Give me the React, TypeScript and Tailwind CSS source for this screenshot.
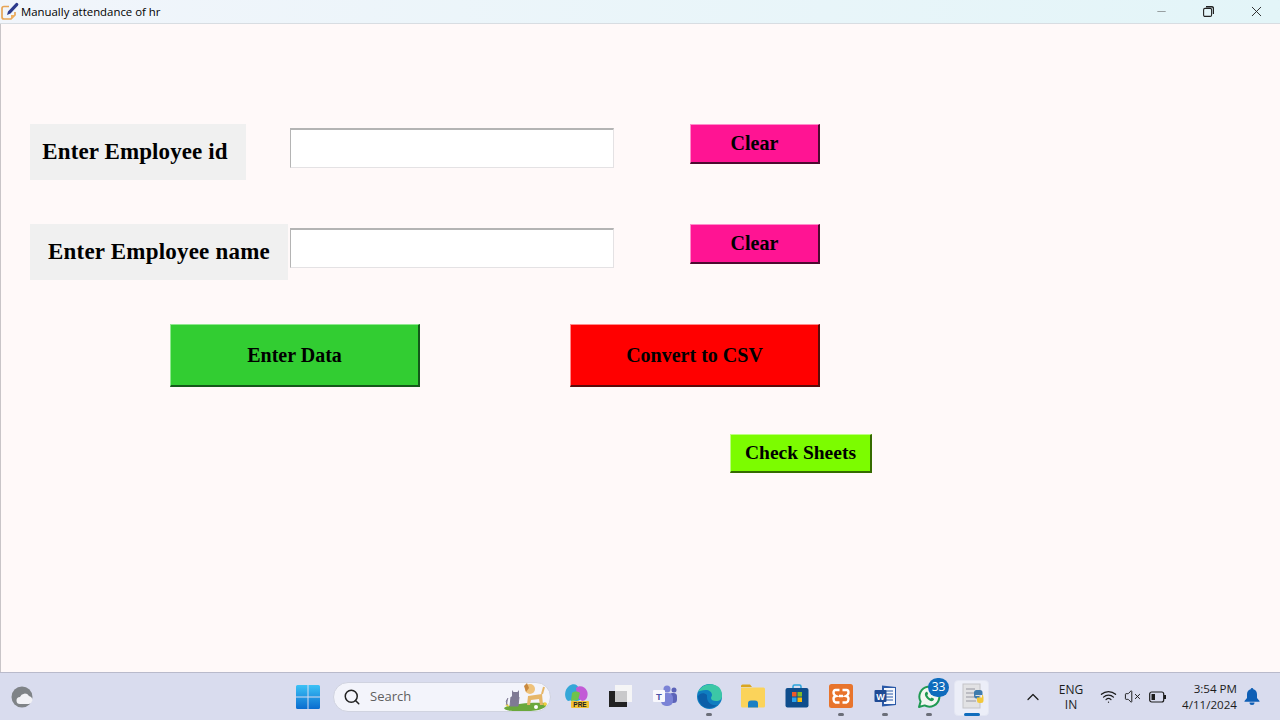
import { Search, ChevronUp, Wifi, VolumeX, Minus, X } from "lucide-react";

const serif = "font-['Liberation_Serif',serif] font-bold text-black";

function TaskIcon({ children, dot, active }: { children: React.ReactNode; dot?: boolean; active?: boolean }) {
  return (
    <div className="relative flex h-[47px] w-[44px] items-center justify-center pb-[1px]">
      {active && <div className="absolute left-[3px] top-[7px] h-[36px] w-[35px] rounded-[4px] border border-[#e3e6f3] bg-[#eceef8]" />}
      <div className="relative">{children}</div>
      {dot && <div className="absolute bottom-[4px] left-[19px] h-[3px] w-[6px] rounded-full bg-[#6b6e78]" />}
      {active && <div className="absolute bottom-[4px] left-[13px] h-[3px] w-[16px] rounded-full bg-[#0f6cbd]" />}
    </div>
  );
}

function ClearButton() {
  return (
    <button className={`ml-[76px] h-[40px] w-[130px] border-t border-l border-t-[#ff8ccb] border-l-[#ff8ccb] border-r-2 border-b-2 border-r-[#4d0a30] border-b-[#4d0a30] bg-[#ff1493] pb-[2px] text-[20px] ${serif}`}>
      Clear
    </button>
  );
}

function TitleBar() {
  return (
    <div className="flex h-[24px] items-center border-b border-[#d8dde2] bg-gradient-to-r from-[#f1f5fb] to-[#e3f5f8]">
      <svg width="20" height="22" viewBox="0 0 20 22" className="mb-[1px]">
        <path d="M9 6.500H4A2 2 0 0 0 2 8.500V17a2 2 0 0 0 2 2h7l4-4v-3" fill="none" stroke="#e8a556" strokeWidth="1.700" />
        <path d="M11 19v-4h4z" fill="#f0b060" />
        <path d="M7 15l1-3.500L15.500 3.500a1.500 1.500 0 0 1 2.500 2L10.500 13.500z" fill="#2d3a8c" />
      </svg>
      <span className="ml-[1px] font-['Open_Sans',sans-serif] text-[11.4px] text-black">Manually attendance of hr</span>
      <div className="ml-auto flex items-center text-[#222]">
        <Minus size={13} strokeWidth={1} className="mr-[35px] text-[#555]" />
        <svg width="11" height="11" viewBox="0 0 11 11" className="mr-[34px]" fill="none" stroke="#222" strokeWidth="1.1">
          <rect x="0.6" y="2.4" width="8" height="8" rx="1.4" />
          <path d="M3 .7h5.5a2 2 0 0 1 2 2V8" strokeWidth="1.4" />
        </svg>
        <X size={17} strokeWidth={1.3} className="mr-[15px]" />
      </div>
    </div>
  );
}

function FormArea() {
  return (
    <div className="h-[648px] border-l border-[#c9c5c8] bg-[#fff9f9] pt-[100px]">
      <div className="flex items-start">
        <div className={`ml-[29px] flex h-[56px] w-[216px] items-center justify-center bg-[#f0f0f0] pr-[6px] text-[23px] tracking-[0.1px] ${serif}`}>Enter Employee id</div>
        <input className="ml-[44px] mt-[4px] h-[40px] w-[324px] border border-[#e4e2e4] border-t-[#b4b4b4] border-l-[#b4b4b4] border-t-2 bg-white" />
        <ClearButton />
      </div>
      <div className="mt-[44px] flex items-start">
        <div className={`ml-[29px] flex h-[56px] w-[258px] items-center justify-center bg-[#f0f0f0] text-[23px] tracking-[0.2px] ${serif}`}>Enter Employee name</div>
        <input className="ml-[2px] mt-[4px] h-[40px] w-[324px] border border-[#e4e2e4] border-t-[#b4b4b4] border-l-[#b4b4b4] border-t-2 bg-white" />
        <ClearButton />
      </div>
      <div className="mt-[44px] flex items-start">
        <button className={`ml-[169px] h-[63px] w-[250px] border-t border-l border-t-[#8fe88f] border-l-[#8fe88f] border-r-2 border-b-2 border-r-[#14591a] border-b-[#14591a] bg-[#32cd32] pb-[1px] text-[20px] ${serif}`}>Enter Data</button>
        <button className={`ml-[150px] h-[63px] w-[250px] border-t border-l border-t-[#ff8a8a] border-l-[#ff8a8a] border-r-2 border-b-2 border-r-[#5a0b0b] border-b-[#5a0b0b] bg-[#ff0000] pb-[1px] text-[20px] ${serif}`}>Convert to CSV</button>
      </div>
      <div className="mt-[47px] flex">
        <button className={`ml-[729px] h-[39px] w-[142px] border-t border-l border-t-[#bdff80] border-l-[#bdff80] border-r-2 border-b-2 border-r-[#356b00] border-b-[#356b00] bg-[#7cfc00] pb-[1px] text-[19.5px] ${serif}`}>Check Sheets</button>
      </div>
    </div>
  );
}

function SearchPill() {
  return (
    <div className="relative ml-[13px] flex h-[30px] w-[218px] items-center rounded-full border border-[#d0d3e0] bg-[#f3f4fb] pl-[9px]">
      <Search size={18} strokeWidth={2} className="text-[#222]" />
      <span className="ml-[9px] font-['Open_Sans',sans-serif] text-[13px] text-[#5f5f5f]">Search</span>
      <svg width="48" height="30" viewBox="0 0 48 30" className="absolute right-[-1px] top-[-2px]">
        <path d="M1 27c6-4 26-6 42-5 2 4-4 8-20 8S2 30 1 27z" fill="#6aa83c" />
        <path d="M2 24l3-1 1 3z" fill="#f1cf3c" />
        <path d="M4 24q-2-4 1-7M8 16h8l-1 9H7z" fill="#7f7a94" stroke="#7f7a94" />
        <path d="M9 9l1.500 2h4L16 9v7a3.500 3.500 0 0 1-7 0z" fill="#7f7a94" />
        <path d="M24 24l1-9 14-2 1 11h-3l-1-6-8 1-1 5z" fill="#e6b668" />
        <circle cx="27" cy="8" r="5" fill="#efc27a" />
        <path d="M21 5l3-3 2 5-3 4z" fill="#c9883e" />
        <path d="M39 13l2-7" stroke="#e6b668" strokeWidth="2" />
        <circle cx="33" cy="26" r="2" fill="#fff" />
        <circle cx="42" cy="23" r="1.800" fill="#f1cf3c" />
      </svg>
    </div>
  );
}

function Taskbar() {
  return (
    <div className="flex h-[48px] items-center border-t border-[#b9bacb] bg-[#d9dcee]">
      <svg width="22" height="22" viewBox="0 0 22 22" className="ml-[11px]">
        <circle cx="11" cy="11" r="10.5" fill="#7f8387" />
        <path d="M9 18a3.500 3.500 0 0 1 0-7 5 5 0 0 1 9-1 4 4 0 0 1 2 7l-2 1z" fill="#f2f2f6" />
      </svg>
      <svg width="24" height="24" viewBox="0 0 24 24" className="ml-[263px]">
        <defs>
          <linearGradient id="win" x1="0" y1="0" x2="0" y2="1">
            <stop offset="0" stopColor="#3cc2f6" />
            <stop offset="1" stopColor="#0a6ccf" />
          </linearGradient>
        </defs>
        <path d="M0 1.500A1.500 1.500 0 0 1 1.500 0H11.500v11.500H0zM12.500 0H22.500A1.500 1.500 0 0 1 24 1.500V11.500H12.500zM0 12.500h11.500V24H1.500A1.500 1.500 0 0 1 0 22.500zM12.500 12.500H24V22.500A1.500 1.500 0 0 1 22.500 24H12.500z" fill="url(#win)" />
      </svg>
      <SearchPill />
      <div className="ml-[4px] flex">
        <TaskIcon>
          <svg width="26" height="26" viewBox="0 0 26 26" className="ml-[-1px]">
            <path d="M5 3c4-3 9-2 10 3l3 8c-1 4-6 5-9 3L4 18C0 15 0 7 5 3z" fill="#35a7d8" />
            <path d="M12 5c3-3 9-2 11 3 2 5-1 10-5 10l-5-4z" fill="#c25bd6" />
            <path d="M8 10c2-2 6-2 8 0l-2 7-7 1z" fill="#6fc24a" />
            <rect x="7" y="18" width="18" height="7" rx="1" fill="#f4c332" />
            <text x="16" y="24" textAnchor="middle" fontSize="6.500" fontWeight="700" fontFamily="Liberation Sans" fill="#222">PRE</text>
          </svg>
        </TaskIcon>
        <TaskIcon>
          <svg width="24" height="24" viewBox="0 0 24 24">
            <rect x="6" y="1" width="17" height="17" fill="#f5f5f6" />
            <rect x="0" y="7" width="18" height="16" fill="#222" />
            <rect x="6" y="7" width="12" height="11" fill="#c9c9cb" />
          </svg>
        </TaskIcon>
        <TaskIcon>
          <svg width="25" height="24" viewBox="0 0 25 24">
            <circle cx="14" cy="5" r="3.500" fill="#7b83d6" />
            <circle cx="21" cy="6" r="2.500" fill="#5c63b8" />
            <rect x="16" y="9" width="8" height="10" rx="3.500" fill="#5c63b8" />
            <rect x="8" y="9" width="12" height="13" rx="5" fill="#7b83d6" />
            <rect x="0" y="6" width="12" height="12" rx="1" fill="#f8f8fd" />
            <text x="6" y="15.500" textAnchor="middle" fontSize="9.500" fontWeight="700" fontFamily="Liberation Sans" fill="#4b53a8">T</text>
          </svg>
        </TaskIcon>
        <TaskIcon dot>
          <svg width="25" height="25" viewBox="0 0 25 25">
            <circle cx="12.500" cy="12.500" r="12.500" fill="#0f7ec0" />
            <path d="M1 8C4 1 13-2 20 2c4 2 5 6 5 10 0 3-2 5-6 5-3 0-5-1-5-3 0-1 1-2 1-3 0-3-3-5-6-5-4 0-7 1-8 2z" fill="#3cc7a6" />
            <path d="M10 13c0 5 4 9 10 8-3 3-9 4-13 2-3-2-6-6-6-11 2-3 6-4 9-1z" fill="#0c5fa8" />
          </svg>
        </TaskIcon>
        <TaskIcon>
          <svg width="24" height="24" viewBox="0 0 24 24">
            <path d="M0 2a1.500 1.500 0 0 1 1.500-1.500H9l2 2.500H0z" fill="#d9a520" />
            <path d="M0 3.500h22.500A1.500 1.500 0 0 1 24 5v17a1.500 1.500 0 0 1-1.500 1.500h-21A1.500 1.500 0 0 1 0 22z" fill="#fbd35a" />
            <path d="M7 23.500v-4A3 3 0 0 1 10 16.500h4A3 3 0 0 1 17 19.500v4z" fill="#1a7fc4" />
          </svg>
        </TaskIcon>
        <TaskIcon>
          <svg width="24" height="24" viewBox="0 0 24 24">
            <path d="M8 5V2.500A1.500 1.500 0 0 1 9.500 1h5A1.500 1.500 0 0 1 16 2.500V5" fill="none" stroke="#2aa4dc" strokeWidth="1.500" />
            <rect x="0.500" y="4" width="23" height="19.500" rx="2" fill="#0f4d8c" />
            <rect x="7" y="8" width="4.500" height="4.500" fill="#ef5a2a" />
            <rect x="12.500" y="8" width="4.500" height="4.500" fill="#7fba2a" />
            <rect x="7" y="13.500" width="4.500" height="4.500" fill="#2aa4ef" />
            <rect x="12.500" y="13.500" width="4.500" height="4.500" fill="#fbbc09" />
          </svg>
        </TaskIcon>
        <TaskIcon dot>
          <svg width="24" height="24" viewBox="0 0 24 24">
            <rect width="24" height="24" rx="2.500" fill="#e8742c" />
            <path d="M10.500 6H6.500Q4.500 6 4.500 8.500T7 12Q4.500 12.500 4.500 15T6.500 18.500H10.500M13.500 6H17.500Q19.500 6 19.500 8.500T17 12Q19.500 12.500 19.500 15T17.500 18.500H13.500M10 12H14" fill="none" stroke="#fff" strokeWidth="2.400" />
          </svg>
        </TaskIcon>
        <TaskIcon dot>
          <svg width="22" height="22" viewBox="0 0 22 22">
            <path d="M8 0.500l14 1.500v18L8 21.500z" fill="#2b5aa8" />
            <rect x="10" y="3" width="11" height="16" fill="#f5f7fc" />
            <path d="M12 6h7M12 9h7M12 12h7M12 15h7" stroke="#2b5aa8" strokeWidth="1.100" />
            <rect x="0.500" y="5" width="12" height="12" rx="1" fill="#1f4a94" />
            <text x="6.500" y="14.500" textAnchor="middle" fontSize="9" fontWeight="700" fontFamily="Liberation Sans" fill="#fff">W</text>
          </svg>
        </TaskIcon>
        <TaskIcon dot>
          <svg width="24" height="24" viewBox="0 0 24 24" className="mt-[1px]">
            <path d="M2 22l1.600-5.600A10 10 0 1 1 7.600 20.400z" fill="#f2f6f0" stroke="#1f9a52" strokeWidth="2" strokeLinejoin="round" />
            <path d="M8.500 7.500c-1 1-1 3 1 5.500s4.500 3.500 6 3c1-.4 1.500-1.300 1.500-2.200l-2.300-1.200-1 1c-1.500-.5-3-2-3.500-3.500l1-1-1-2.300c-.8-.2-1.300 0-1.700.7z" fill="#1f9a52" />
          </svg>
          <div className="absolute right-[-8px] top-[-6px] flex h-[19px] w-[21px] items-center justify-center rounded-full bg-[#0f6cbd] font-['Open_Sans',sans-serif] text-[12px] text-white">33</div>
        </TaskIcon>
        <TaskIcon active>
          <svg width="24" height="26" viewBox="0 0 24 26" className="ml-[1px]">
            <rect x="1" y="1" width="17" height="24" fill="#e2e2e4" stroke="#c4c4c8" />
            <path d="M4 6h9M4 10h11M4 14h8M4 18h10" stroke="#b0b0b6" strokeWidth="1.500" />
            <path d="M15 7h3a2.500 2.500 0 0 1 2.500 2.500V12h-7v1h4v2.500h-3A2.500 2.500 0 0 1 12 13v-3.500A2.500 2.500 0 0 1 15 7z" fill="#3f7cad" />
            <path d="M21 12h-1v2.500h-5v3A2.500 2.500 0 0 0 17.500 20H19a2.500 2.500 0 0 0 2.500-2.500v-3z" fill="#f2c83c" />
          </svg>
        </TaskIcon>
      </div>
      <ChevronUp size={20} strokeWidth={1.500} className="ml-[28px] text-[#1c1c1c]" />
      <div className="ml-[14px] w-[28px] text-center font-['Open_Sans',sans-serif] text-[12px] leading-[15px] text-[#1c1c1c]">
        ENG<br />IN
      </div>
      <Wifi size={17} strokeWidth={1.800} className="ml-[15px] text-[#1c1c1c]" />
      <VolumeX size={17} strokeWidth={1.400} className="ml-[7px] text-[#1c1c1c]" />
      <svg width="18" height="12" viewBox="0 0 18 12" className="ml-[8px]" fill="none">
        <rect x="0.700" y="1" width="14" height="10" rx="2" stroke="#1c1c1c" strokeWidth="1.200" />
        <rect x="2.500" y="3" width="3.500" height="6" fill="#1c1c1c" />
        <path d="M16 4v4" stroke="#1c1c1c" strokeWidth="2" />
      </svg>
      <div className="ml-[13px] w-[57px] text-right font-['Open_Sans',sans-serif] text-[11.6px] leading-[16px] text-[#1c1c1c]">
        <div>3:54 PM</div>
        <div className="whitespace-nowrap">4/11/2024</div>
      </div>
      <svg width="16" height="17" viewBox="0 0 16 17" className="ml-[7px]">
        <path d="M8 0a1.500 1.500 0 0 1 1.400 1.200C12 2 13 4 13 6.500V10l2.500 3v.8H.500V13L3 10V6.500C3 4 4 2 6.600 1.200A1.500 1.500 0 0 1 8 0zM5.500 14.500h5A2.500 2.500 0 0 1 8 17a2.500 2.500 0 0 1-2.500-2.500z" fill="#0f5fb5" />
      </svg>
    </div>
  );
}

export default function App() {
  return (
    <div className="h-[720px] w-[1280px] overflow-hidden bg-[#fff9f9]">
      <TitleBar />
      <FormArea />
      <Taskbar />
    </div>
  );
}
